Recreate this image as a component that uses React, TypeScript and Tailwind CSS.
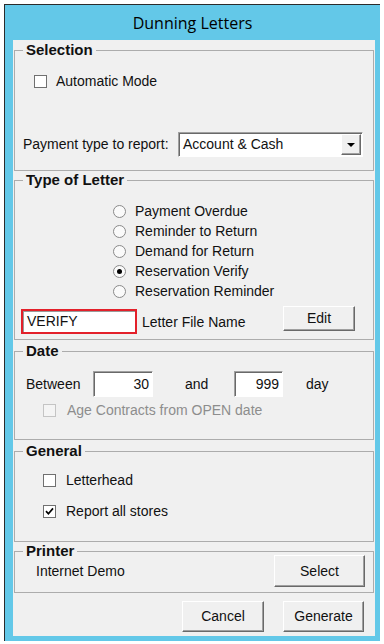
import React from 'react'

const uiFont = { fontFamily: '"Liberation Sans", Arial, sans-serif' }

function CheckBox({ checked, disabled }: { checked?: boolean; disabled?: boolean }) {
  return (
    <span
      className={`flex h-[13px] w-[13px] shrink-0 items-center justify-center border ${
        disabled ? 'border-[#c4c4c4] bg-[#f4f4f4]' : 'border-[#707070] bg-white'
      }`}
    >
      {checked && (
        <svg width="9" height="9" viewBox="0 0 9 9">
          <path d="M1 4.2 L3.4 6.8 L8 1.4" fill="none" stroke="#000" strokeWidth="1.7" />
        </svg>
      )}
    </span>
  )
}

function Radio({ checked }: { checked?: boolean }) {
  return (
    <span className="flex h-[13px] w-[13px] shrink-0 items-center justify-center rounded-full border border-[#8a8a8a] bg-[#fafafa]">
      {checked && <span className="h-[5px] w-[5px] rounded-full bg-black" />}
    </span>
  )
}

function Button({ label, className }: { label: string; className: string }) {
  return (
    <div
      className={`flex shrink-0 items-center justify-center border border-t-white border-l-white border-b-[#696969] border-r-[#696969] bg-[#f0f0f0] text-[14px] shadow-[inset_-1px_-1px_0_#a0a0a0] ${className}`}
    >
      {label}
    </div>
  )
}

function NumBox({ value, className }: { value: string; className: string }) {
  return (
    <div
      className={`flex h-[26px] shrink-0 items-center justify-end border border-t-[#a0a0a0] border-l-[#a0a0a0] border-b-white border-r-white bg-white pr-[3px] shadow-[inset_1px_1px_0_#696969] ${className}`}
    >
      {value}
    </div>
  )
}

function Group({ title, className, children }: { title: string; className: string; children: React.ReactNode }) {
  return (
    <fieldset className={`border border-[#acacac] ${className}`}>
      <legend className="ml-[8px] px-[3px] text-[15px] font-bold leading-[16px]">{title}</legend>
      {children}
    </fieldset>
  )
}

const letters = [
  { label: 'Payment Overdue' },
  { label: 'Reminder to Return' },
  { label: 'Demand for Return' },
  { label: 'Reservation Verify', checked: true },
  { label: 'Reservation Reminder' },
]

export default function App() {
  return (
    <div className="h-[644px] w-[384px] bg-white pl-[4px] pt-[4px] text-[14px] text-[#111]" style={uiFont}>
      <div className="flex h-[637px] w-[376px] flex-col border-t border-l border-[#2b2b2b] bg-[#63c8e8]">
        {/* Title bar */}
        <div
          className="flex h-[35px] shrink-0 items-center justify-center pt-[1px] text-[16px] text-black"
          style={{ fontFamily: '"Open Sans", "Noto Sans", sans-serif' }}
        >
          Dunning Letters
        </div>

        {/* Client area */}
        <div className="ml-[8px] flex h-[596px] w-[362px] flex-col bg-[#f0f0f0] px-[1px]">
          <Group title="Selection" className="mt-[2px] h-[129px]">
            <div className="mt-[15px] flex h-[16px] items-center pl-[19px]">
              <CheckBox />
              <span className="ml-[9px]">Automatic Mode</span>
            </div>
            <div className="mt-[43px] flex h-[25px] items-center pl-[8px]">
              <span className="w-[155px] shrink-0">Payment type to report:</span>
              <div className="flex h-[25px] w-[185px] items-center border border-t-[#a0a0a0] border-l-[#a0a0a0] border-b-white border-r-white bg-white shadow-[inset_1px_1px_0_#696969]">
                <span className="flex-1 pl-[4px]">Account &amp; Cash</span>
                <div className="mr-[1px] flex h-[21px] w-[20px] items-center justify-center border border-t-white border-l-white border-b-[#696969] border-r-[#696969] bg-[#f0f0f0] shadow-[inset_-1px_-1px_0_#a0a0a0]">
                  <svg width="8" height="4" viewBox="0 0 8 4">
                    <path d="M0 0 H8 L4 4 Z" fill="#000" />
                  </svg>
                </div>
              </div>
            </div>
          </Group>

          <Group title="Type of Letter" className="mt-[1px] h-[168px]">
            <div className="mt-[13px] flex flex-col pl-[98px]">
              {letters.map((l) => (
                <div key={l.label} className="flex h-[20px] items-center">
                  <Radio checked={l.checked} />
                  <span className="ml-[9px]">{l.label}</span>
                </div>
              ))}
            </div>
            <div className="mt-[5px] flex items-start pl-[6px]">
              <div className="mt-[3px] flex h-[25px] w-[116px] shrink-0 items-center border-2 border-[#e3202a] bg-white pl-[4px] shadow-[inset_1px_1px_0_#9a9a9a]">
                VERIFY
              </div>
              <span className="ml-[5px] mt-[6px]">Letter File Name</span>
              <Button label="Edit" className="ml-auto mr-[18px] h-[25px] w-[72px]" />
            </div>
          </Group>

          <Group title="Date" className="mt-[3px] h-[97px]">
            <div className="mt-[12px] flex h-[26px] items-center pl-[11px]">
              <span className="w-[67px] shrink-0">Between</span>
              <NumBox value="30" className="w-[60px]" />
              <span className="ml-[32px] w-[49px] shrink-0">and</span>
              <NumBox value="999" className="w-[49px]" />
              <span className="ml-[23px]">day</span>
            </div>
            <div className="mt-[6px] flex h-[14px] items-center pl-[28px]">
              <CheckBox disabled />
              <span className="ml-[11px] text-[#8d8d8d]">Age Contracts from OPEN date</span>
            </div>
          </Group>

          <Group title="General" className="mt-[3px] h-[99px]">
            <div className="mt-[14px] flex h-[14px] items-center pl-[28px]">
              <CheckBox />
              <span className="ml-[10px]">Letterhead</span>
            </div>
            <div className="mt-[17px] flex h-[14px] items-center pl-[28px]">
              <CheckBox checked />
              <span className="ml-[10px]">Report all stores</span>
            </div>
          </Group>

          <Group title="Printer" className="mt-[1px] h-[50px]">
            <div className="-mt-[4px] flex h-[32px] items-center pl-[21px] pr-[8px]">
              <span className="flex-1">Internet Demo</span>
              <Button label="Select" className="h-[32px] w-[91px]" />
            </div>
          </Group>

          <div className="mt-[8px] flex justify-end gap-[19px] pr-[10px]">
            <Button label="Cancel" className="h-[31px] w-[82px]" />
            <Button label="Generate" className="h-[31px] w-[81px]" />
          </div>
        </div>
      </div>
    </div>
  )
}
